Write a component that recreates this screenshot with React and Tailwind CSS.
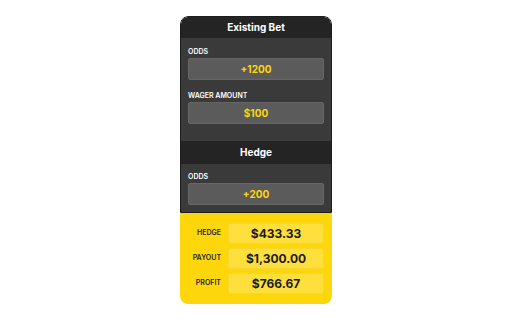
import React from 'react';

function Field({ label, value, className = '' }) {
  return (
    <div className={className}>
      <div className="text-[7px] leading-[9px] font-semibold text-white uppercase mb-[2px]">{label}</div>
      <div className="h-[22px] rounded-[2px] bg-[#5b5b5b] border border-[#666] flex items-center justify-center text-[10px] font-bold text-[#ffd60a]">
        {value}
      </div>
    </div>
  );
}

function ResultRow({ label, value }) {
  return (
    <div className="flex items-center gap-[7px]">
      <div className="w-[33px] text-right text-[7px] font-semibold text-[#1f1f2b] uppercase">{label}</div>
      <div className="flex-1 h-[21px] rounded-[3px] bg-[#ffdf3b] border border-[#f8d62e] flex items-center justify-center text-[12px] font-bold text-[#1a1a26]">
        {value}
      </div>
    </div>
  );
}

export default function App() {
  return (
    <div className="w-[512px] h-[320px] bg-white flex justify-center pt-4" style={{ fontFamily: 'Inter, "Liberation Sans", sans-serif' }}>
      <div className="w-[152px] h-[288px] rounded-lg overflow-hidden flex flex-col">
        <div className="border border-[#1c1c1c] rounded-t-lg overflow-hidden">
          <div className="h-[21px] bg-[#242424] flex items-center justify-center text-white text-[10px] font-bold">
            Existing Bet
          </div>
          <div className="bg-[#3a3a3b] px-[7px] pt-[9px] pb-[17px]">
            <Field label="Odds" value="+1200" />
            <Field label="Wager Amount" value="$100" className="mt-[11px]" />
          </div>
          <div className="h-[23px] bg-[#242424] flex items-center justify-center text-white text-[10px] font-bold">
            Hedge
          </div>
          <div className="bg-[#3a3a3b] px-[7px] pt-[8px] pb-[7px]">
            <Field label="Odds" value="+200" />
          </div>
        </div>
        <div className="flex-1 bg-[#fdd70b] px-[8px] pt-[10px] flex flex-col gap-[4px]">
          <ResultRow label="Hedge" value="$433.33" />
          <ResultRow label="Payout" value="$1,300.00" />
          <ResultRow label="Profit" value="$766.67" />
        </div>
      </div>
    </div>
  );
}
